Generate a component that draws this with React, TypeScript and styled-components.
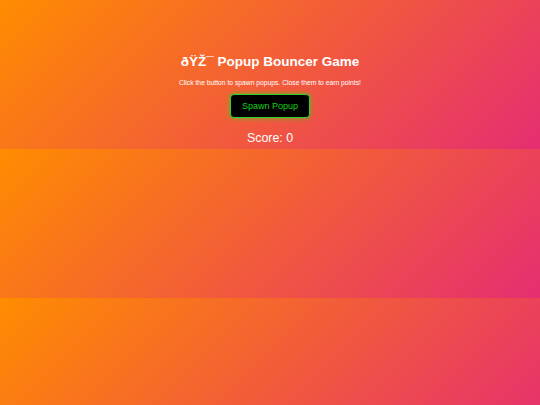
import React from "react";
import styled, { createGlobalStyle } from "styled-components";

const GlobalStyle = createGlobalStyle`
  html, body {
    margin: 0;
    padding: 0;
  }
  body {
    font-family: "Liberation Sans", Arial, sans-serif;
    background: linear-gradient(135deg, #ff8c00, #e52e71);
    color: #ffffff;
  }
`;

const Page = styled.main`
  display: flex;
  flex-direction: column;
  align-items: center;
  text-align: center;
  padding: 53.75px 0 3.5px;
`;

const Title = styled.h1`
  margin: 0;
  font-size: 13.5px;
  line-height: 15.5px;
  font-weight: bold;
  color: #ffffff;
`;

const Hint = styled.p`
  margin: 9.75px 0 0;
  font-size: 6.75px;
  line-height: 8px;
  color: #ffffff;
`;

const SpawnButton = styled.button`
  margin-top: 7px;
  width: 80px;
  height: 24px;
  box-sizing: border-box;
  padding: 0;
  background: #000000;
  color: #18d018;
  border: 1px solid #30d030;
  border-radius: 4px;
  box-shadow: 0 0 5px rgba(0, 255, 0, 0.6);
  font-family: "Liberation Sans", Arial, sans-serif;
  font-size: 9px;
  cursor: pointer;
`;

const Score = styled.div`
  margin-top: 13px;
  font-size: 12.4px;
  line-height: 14px;
  color: #ffffff;
`;

export default function App() {
  return (
    <>
      <GlobalStyle />
      <Page>
        <Title>ðŸŽ¯ Popup Bouncer Game</Title>
        <Hint>Click the button to spawn popups. Close them to earn points!</Hint>
        <SpawnButton>Spawn Popup</SpawnButton>
        <Score>Score: 0</Score>
      </Page>
    </>
  );
}
